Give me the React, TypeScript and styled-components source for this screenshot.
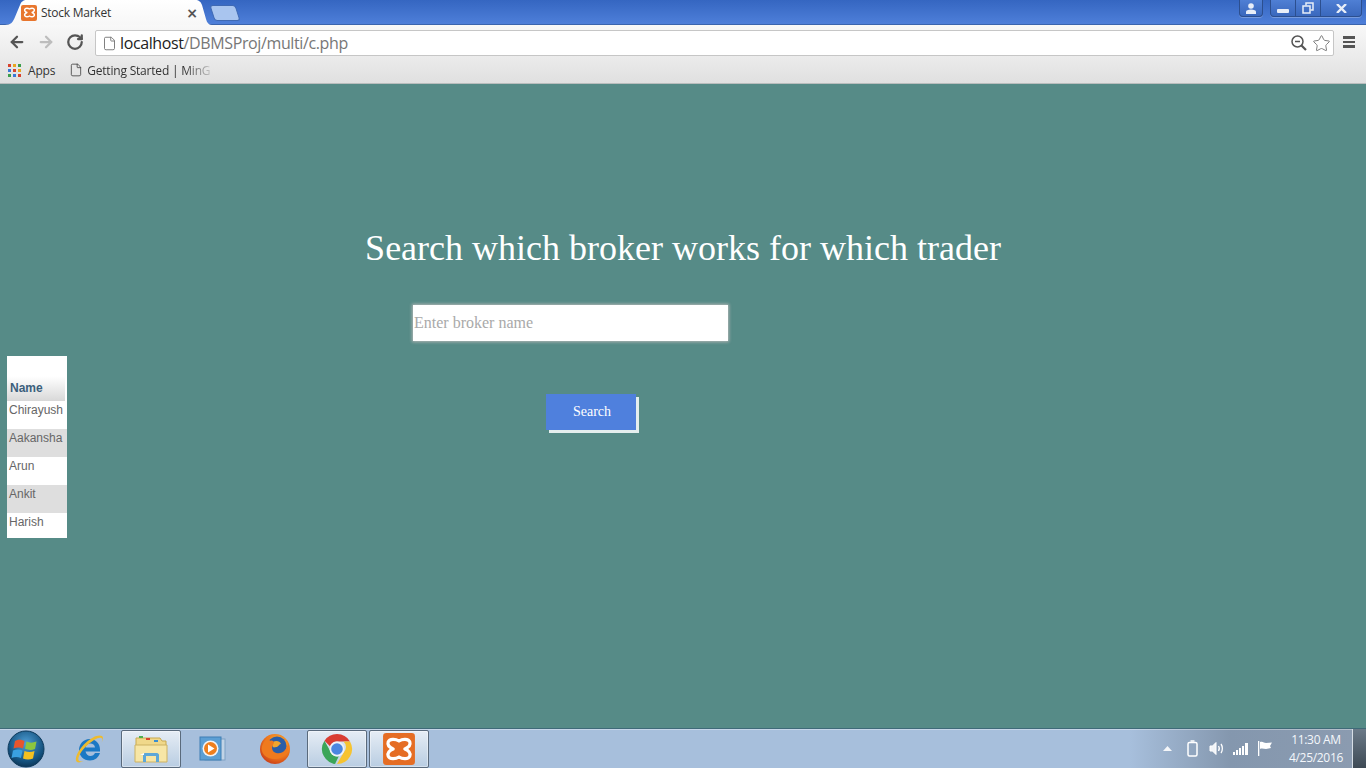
import React from 'react';
import styled, { createGlobalStyle } from 'styled-components';
import { ArrowLeft, ArrowRight, File, RotateCw, Star } from 'lucide-react';

// Styles
const GlobalStyle = createGlobalStyle`
  html, body, #root {
    height: 100%;
  }

  body {
    margin: 0;
    overflow: hidden;
    font-family: "Open Sans", "Liberation Sans", sans-serif;
  }
`;

const Screen = styled.div`
  display: flex;
  flex-direction: column;
  width: 1366px;
  height: 768px;
`;

const TabStrip = styled.div`
  display: flex;
  flex: 0 0 25px;
  padding-left: 5px;
  background: linear-gradient(#3566c1, #4f80da);
  box-shadow: inset 0 -1px 0 #3a64ad;
`;

const Tab = styled.div`
  display: flex;
  align-items: center;
  width: 207px;
  padding-left: 16px;
  box-sizing: border-box;
  background: linear-gradient(#fff, #f7f7f7);
  clip-path: path('M0 25 C6 25 8 22 10 17 L15 5 C16 2 18 0 22 0 L190 0 C194 0 196 2 197 5 L201 19 C202 23 204 25 207 25 Z');
`;

const Favicon = styled.div`
  display: flex;
  align-items: center;
  justify-content: center;
  width: 16px;
  height: 16px;
  border-radius: 2px;
  background: #e8762e;
`;

const TabTitle = styled.span`
  flex: 1;
  margin-left: 4px;
  font-size: 12px;
  letter-spacing: -0.25px;
  color: #333;
`;

const TabClose = styled.span`
  margin-right: 14px;
  font-family: "DejaVu Sans", sans-serif;
  font-size: 14px;
  font-weight: bold;
  color: #555;
`;

const NewTab = styled.div`
  align-self: flex-start;
  width: 26px;
  height: 16px;
  margin: 5px 0 0 0;
  background: #a9c5ef;
  border: 1px solid #3f69b3;
  border-radius: 3px;
  box-sizing: border-box;
  transform: skewX(18deg);
`;

const WindowControls = styled.div`
  display: flex;
  align-self: flex-start;
  margin-left: auto;
  margin-right: 4px;
`;

const WindowGroup = styled.div`
  display: flex;
  height: 17px;
  margin-left: 7px;
  border: 1px solid #2c4f8f;
  border-top: 0;
  border-radius: 0 0 4px 4px;
  box-sizing: border-box;
  background: linear-gradient(#4f7fd4, #3a68bd);
  box-shadow: 0 1px 0 rgba(255, 255, 255, 0.25);
`;

const WindowButton = styled.div<{ $w: number }>`
  display: flex;
  align-items: center;
  justify-content: center;
  width: ${(p) => p.$w}px;
  box-sizing: border-box;
  color: #e8eef8;

  & + & {
    border-left: 1px solid #2c4f8f;
  }
`;

const MinimizeBar = styled.span`
  width: 12px;
  height: 4px;
  margin-top: 5px;
  border-radius: 1px;
  background: #e8eef8;
`;

const Toolbar = styled.div`
  display: flex;
  align-items: center;
  flex: 0 0 32px;
  padding-top: 2px;
  box-sizing: border-box;
  background: linear-gradient(#f8f8f8, #ebebeb);
`;

const NavSlot = styled.div<{ $w: number; $color: string }>`
  display: flex;
  align-items: center;
  justify-content: center;
  width: ${(p) => p.$w}px;
  color: ${(p) => p.$color};
`;

const AddressBar = styled.div`
  display: flex;
  align-items: center;
  flex: 1;
  height: 26px;
  margin: 2px 0 0 5px;
  padding: 0 2px 0 6px;
  box-sizing: border-box;
  background: #fff;
  border: 1px solid #c6c6c6;
  border-radius: 2px;
  color: #777;
`;

const Url = styled.div`
  flex: 1;
  margin-left: 3px;
  font-size: 16px;
  letter-spacing: -0.38px;
  color: #777;

  b {
    font-weight: 400;
    color: #222;
  }
`;

const StarIcon = styled(Star)`
  margin-left: 4px;
`;

const MenuSlot = styled.div`
  display: flex;
  flex-direction: column;
  gap: 2px;
  width: 12px;
  margin: 0 11px 0 9px;

  span {
    height: 2.5px;
    background: #555;
  }
`;

const BookmarkBar = styled.div`
  display: flex;
  align-items: center;
  flex: 0 0 27px;
  padding-left: 8px;
  box-sizing: border-box;
  font-size: 12px;
  letter-spacing: -0.2px;
  color: #333;
  background: linear-gradient(#ebebeb, #e0e0e0);
  border-bottom: 1px solid #b9bdbd;
`;

const AppsGrid = styled.div`
  display: grid;
  grid-template-columns: repeat(3, 3px);
  grid-auto-rows: 3px;
  gap: 2px;
`;

const AppsDot = styled.i<{ $color: string }>`
  background: ${(p) => p.$color};
`;

const BookmarkLabel = styled.span`
  margin: 0 14px 0 7px;
`;

const FadedBookmark = styled.span`
  margin-left: 4px;
  padding-right: 6px;
  mask-image: linear-gradient(90deg, #000 75%, transparent 100%);
`;

const Page = styled.main`
  display: grid;
  flex: 1;
  grid-template-columns: 413px 1fr;
  grid-template-rows: 221px 1fr;
  background: #568b87;
`;

const Heading = styled.h1`
  grid-column: 1 / 3;
  align-self: end;
  margin: 0 0 36px;
  font-family: "Liberation Serif", serif;
  font-size: 36px;
  font-weight: 400;
  line-height: 41px;
  text-align: center;
  color: #fff;
`;

const BrokerTable = styled.table`
  align-self: start;
  width: 60px;
  margin: 51px 0 0 7px;
  border-collapse: collapse;
  font-family: "Liberation Sans", sans-serif;
  font-size: 12px;
  background: #fff;
`;

const HeadCell = styled.th`
  height: 45px;
  padding: 19px 0 0 3px;
  box-sizing: border-box;
  text-align: left;
  color: #3c5f7c;
  background: linear-gradient(#fff 45%, #d8d8d8) no-repeat;
  background-size: calc(100% - 2px) 100%;
`;

const NameRow = styled.tr`
  &:nth-child(even) {
    background: #dedede;
  }
`;

const NameCell = styled.td<{ $h: number }>`
  height: ${(p) => p.$h}px;
  padding: 2px 0 0 2px;
  box-sizing: border-box;
  vertical-align: top;
  white-space: nowrap;
  color: #666;
`;

const SearchForm = styled.form`
  display: flex;
  flex-direction: column;
  align-items: flex-start;
`;

const SearchInput = styled.input`
  width: 315px;
  height: 36px;
  padding: 0 1px;
  box-sizing: border-box;
  border: 0;
  outline: 0;
  font-family: "Liberation Serif", serif;
  font-size: 16px;
  background: #fff;
  box-shadow: 0 0 3px 1px rgba(200, 190, 190, 0.8);

  &::placeholder {
    color: #a9a9a9;
  }
`;

const SearchButton = styled.button`
  width: 90px;
  height: 36px;
  margin: 53px 0 0 133px;
  padding: 0 0 0 2px;
  border: 0;
  font-family: "Liberation Serif", serif;
  font-size: 14px;
  color: #fff;
  background: #4f80dd;
  box-shadow: 3px 3px 0 #e4eeee;
`;

const Taskbar = styled.footer`
  display: flex;
  align-items: center;
  flex: 0 0 40px;
  box-sizing: border-box;
  border-top: 1px solid #3f6a78;
  background: linear-gradient(90deg, #a7bfdc 0, #a7bfdc 1130px, #8497ae 1230px, #8b9bb0 1352px);
  box-shadow: inset 0 1px 0 rgba(255, 255, 255, 0.35);
`;

const StartSlot = styled.div`
  display: flex;
  align-items: center;
  justify-content: center;
  width: 52px;
  margin-right: 7px;
`;

const TaskSlot = styled.div<{ $active?: boolean }>`
  display: flex;
  align-items: center;
  justify-content: center;
  width: 60px;
  height: 38px;
  margin-right: 2px;
  box-sizing: border-box;
  border-radius: 2px;
  border: 1px solid ${(p) => (p.$active ? '#5a6a7c' : 'transparent')};
  background: ${(p) => (p.$active ? 'linear-gradient(#e6edf5, #b9cde2)' : 'transparent')};
  box-shadow: ${(p) => (p.$active ? 'inset 0 0 0 1px rgba(255, 255, 255, 0.4)' : 'none')};
`;

const Tray = styled.div`
  display: flex;
  align-items: center;
  margin-left: auto;
  color: #fff;
`;

const TrayIcon = styled.div<{ $w: number }>`
  display: flex;
  align-items: center;
  justify-content: center;
  width: ${(p) => p.$w}px;
  height: 20px;
`;

const Clock = styled.div`
  width: 62px;
  margin: 0 5px 0 10px;
  font-size: 12px;
  line-height: 17.5px;
  letter-spacing: -0.3px;
  text-align: center;
  white-space: nowrap;
  color: #f4f7fb;
`;

const ShowDesktop = styled.div`
  width: 14px;
  height: 39px;
  background: linear-gradient(#6b7a88, #3e4a55);
  border-left: 1px solid #d7dee6;
  box-sizing: border-box;
`;

// Drawings
const XamppMark: React.FC<{ size: number; tile?: boolean }> = ({ size, tile }) => (
  <svg width={size} height={size} viewBox="0 0 32 32">
    {tile && <rect x="1" y="1" width="30" height="30" rx="3" fill="#e56d24" />}
    <path
      d="M16 8.500C13 6.500 7 6 5.800 9.500C5 12 7 14.500 10.500 16C7 17.500 5 20 5.800 22.500C7 26 13 25.500 16 23.500C19 25.500 25 26 26.200 22.500C27 20 25 17.500 21.500 16C25 14.500 27 12 26.200 9.500C25 6 19 6.500 16 8.500Z"
      fill="none"
      stroke="#fff"
      strokeWidth="3"
      strokeLinejoin="round"
    />
  </svg>
);

const WindowsOrb = () => (
  <svg width="38" height="38" viewBox="0 0 38 38">
    <defs>
      <radialGradient id="orb" cx="50%" cy="35%" r="70%">
        <stop offset="0" stopColor="#4f9fd6" />
        <stop offset="0.7" stopColor="#14527f" />
        <stop offset="1" stopColor="#0b2f4d" />
      </radialGradient>
    </defs>
    <circle cx="19" cy="19" r="18" fill="url(#orb)" stroke="#0d3a5c" />
    <path d="M8 11c3.500-2 6-1.500 9.500 0l-1.500 7.500c-3-1.500-6-1.500-9.500 0z" fill="#e8552c" />
    <path d="M19.500 11.500c3 1.500 6 1.500 10 0l-1.500 7.500c-3.500 1.500-7 1-10-.2z" fill="#8cc63f" />
    <path d="M6 20.500c3.500-1.500 6.500-1.500 9.500 0L14 28c-3-1.500-6.500-1.500-9.500 0z" fill="#3aa0e0" />
    <path d="M17.500 21c3 1.200 6.500 1.500 10 0L26 28.500c-3.500 1.500-7 1.200-10 0z" fill="#f4c020" />
  </svg>
);

const IeIcon = () => (
  <svg width="32" height="32" viewBox="0 0 32 32">
    <path
      fillRule="evenodd"
      d="M16.500 6c6 0 10.500 4.500 10.500 10.500v2H12.500c.5 2.500 2.500 4.500 5 4.500 2.200 0 3.500-1 4.500-3h5c-1.500 4.500-5 7.500-10 7.500-6.500 0-11-4.800-11-10.500S10.500 6 16.500 6zM12.500 14.500H22c-.2-2.500-2.300-4-4.700-4-2.500 0-4.300 1.500-4.800 4z"
      fill="#1b78c4"
    />
    <path
      d="M29 3c-3.500-2-10 1-16 6.500C6.500 15.500 2 23 3 27.500c.6 2.500 4 2.500 7.500.5-2.500.8-4.500.5-5-1-1-3 3-9.500 9-15C20 7 26 3.500 28.500 5c1.200.8 1 2.500 0 5 1.500-3 2-6 .5-7z"
      fill="#eebb2e"
    />
  </svg>
);

const ExplorerIcon = () => (
  <svg width="34" height="30" viewBox="0 0 34 30">
    <path d="M2 4h24l2 3h4v6H2z" fill="#f0d88a" stroke="#c9a94f" />
    <rect x="5" y="2" width="4" height="2" fill="#4caf50" />
    <rect x="12" y="4" width="4" height="2" fill="#d9432f" />
    <rect x="20" y="6" width="4" height="2" fill="#3a8fd0" />
    <path d="M1 11h32v17H1z" fill="#f7e6a6" stroke="#cdb263" />
    <path d="M9 28v-7c0-1 1-2 2-2h12c1 0 2 1 2 2v7h-3v-6H12v6z" fill="#5da7d8" />
    <path d="M6 21l4-2v2z" fill="#fff" />
  </svg>
);

const MediaIcon = () => (
  <svg width="30" height="28" viewBox="0 0 30 28">
    <rect x="7" y="4" width="20" height="21" fill="#c2d4e6" stroke="#7fa2c4" />
    <rect x="2" y="2" width="21" height="23" fill="#5c9fd4" stroke="#3f7fb4" />
    <circle cx="12.500" cy="13.500" r="8" fill="#f4f4f4" />
    <circle cx="12.500" cy="13.500" r="6.500" fill="#ee7f1e" />
    <path d="M10 9.500l6.500 4-6.500 4z" fill="#fff" />
  </svg>
);

const FirefoxIcon = () => (
  <svg width="32" height="32" viewBox="0 0 32 32">
    <defs>
      <radialGradient id="fox" cx="60%" cy="35%" r="70%">
        <stop offset="0" stopColor="#f8c03a" />
        <stop offset="0.6" stopColor="#ef7a1e" />
        <stop offset="1" stopColor="#c83c18" />
      </radialGradient>
    </defs>
    <circle cx="16" cy="16" r="15" fill="url(#fox)" />
    <circle cx="18" cy="13" r="9.500" fill="#2a5ea8" />
    <path d="M14 9c3-2 7-1 8 2-2 0-2 2-4 3-2 0-3 1-4 0-1-2-1-3 0-5z" fill="#f1a52e" />
    <path d="M3 13C5 8 8 5 12 3c-2 2-2 4-1 5 2-1 4 0 4 2-2 3-3 6 0 9 3 2 8 2 11-2 2-3 3-5 4-6 0 8-6 15-14 15C7 26 1 20 3 13z" fill="#ef7a1e" />
  </svg>
);

const ChromeIcon = () => (
  <svg width="32" height="32" viewBox="0 0 32 32">
    <path d="M16 1a15 15 0 0 1 13 7.500H16a7.500 7.500 0 0 0-7 4.800L3.500 7.700A15 15 0 0 1 16 1z" fill="#d93d32" />
    <path d="M29 8.500A15 15 0 0 1 16 31l6.500-11.300a7.500 7.500 0 0 0 0-11.200z" fill="#f6c330" />
    <path d="M16 31A15 15 0 0 1 3.500 7.700L10 19.500a7.500 7.500 0 0 0 7.800 3.800L14 31z" fill="#3ba558" />
    <circle cx="16" cy="16" r="7.500" fill="#eef2f6" />
    <circle cx="16" cy="16" r="5.800" fill="#4a86e0" />
  </svg>
);

const MagnifierMinus = () => (
  <svg width="18" height="18" viewBox="0 0 18 18" fill="none" stroke="#555">
    <circle cx="7.500" cy="7.500" r="5.500" strokeWidth="1.500" />
    <path d="M5 7.500h5" strokeWidth="1.500" />
    <path d="M11.500 11.500l4.500 4.500" strokeWidth="2.200" />
  </svg>
);

const UserGlyph = () => (
  <svg width="12" height="11" viewBox="0 0 12 11" fill="currentColor">
    <circle cx="6" cy="3" r="2.800" />
    <path d="M1 11V8.500C1 7.500 3 6.500 6 6.500s5 1 5 2V11z" />
  </svg>
);

const RestoreGlyph = () => (
  <svg width="12" height="12" viewBox="0 0 12 12" fill="none" stroke="currentColor" strokeWidth="1.500">
    <rect x="1" y="4" width="7" height="7" />
    <path d="M4 3.500V1h7v7H8.500" />
  </svg>
);

const CloseGlyph = () => (
  <svg width="11" height="9" viewBox="0 0 11 9" stroke="currentColor" strokeWidth="2.400">
    <path d="M1 0l9 9M10 0L1 9" />
  </svg>
);

const BatteryGlyph = () => (
  <svg width="11" height="17" viewBox="0 0 11 17" fill="none" stroke="#fff" strokeWidth="1.500">
    <rect x="1" y="2.500" width="9" height="13.500" rx="1.500" />
    <path d="M3.500 1h4" />
  </svg>
);

const SpeakerGlyph = () => (
  <svg width="16" height="15" viewBox="0 0 16 15" fill="none" stroke="#fff">
    <path d="M1 5h2.500L7 1.500v12L3.500 10H1z" fill="#f1f4f8" />
    <path d="M9.500 5c1 1.500 1 3.500 0 5M12 3c1.800 2.500 1.800 6.500 0 9" strokeWidth="1.300" />
  </svg>
);

const SignalGlyph = () => (
  <svg width="16" height="12" viewBox="0 0 16 12" fill="#fff">
    <rect x="0" y="9" width="2" height="3" />
    <rect x="3" y="7" width="2" height="5" />
    <rect x="6" y="5" width="2" height="7" />
    <rect x="9" y="3" width="2" height="9" />
    <rect x="12" y="0" width="3" height="12" />
  </svg>
);

const FlagGlyph = () => (
  <svg width="16" height="15" viewBox="0 0 16 15" fill="#fff">
    <rect x="1" y="0" width="1.300" height="15" />
    <path d="M3 1c3-1 4 1 6 1l6-.5L13 5l1 2-5 1C7 8 5 7 3 8z" />
  </svg>
);

const UpTriangle = () => (
  <svg width="9" height="5" viewBox="0 0 9 5" fill="#f4f6f9">
    <path d="M0 5l4.500-5L9 5z" />
  </svg>
);

const appColors = ['#d8432e', '#e9a521', '#3b9e4c', '#3a78d8', '#d8432e', '#e9a521', '#3b9e4c', '#3a78d8', '#d8432e'];

const names = ['Chirayush', 'Aakansha', 'Arun', 'Ankit', 'Harish'];

const App: React.FC = () => {
  return (
    <Screen>
      <GlobalStyle />

      <TabStrip>
        <Tab>
          <Favicon>
            <XamppMark size={15} />
          </Favicon>
          <TabTitle>Stock Market</TabTitle>
          <TabClose>×</TabClose>
        </Tab>
        <NewTab />
        <WindowControls>
          <WindowGroup>
            <WindowButton $w={22}>
              <UserGlyph />
            </WindowButton>
          </WindowGroup>
          <WindowGroup>
            <WindowButton $w={24}>
              <MinimizeBar />
            </WindowButton>
            <WindowButton $w={25}>
              <RestoreGlyph />
            </WindowButton>
            <WindowButton $w={41}>
              <CloseGlyph />
            </WindowButton>
          </WindowGroup>
        </WindowControls>
      </TabStrip>

      <Toolbar>
        <NavSlot $w={33} $color="#555">
          <ArrowLeft size={18} strokeWidth={3} />
        </NavSlot>
        <NavSlot $w={26} $color="#bdbdbd">
          <ArrowRight size={18} strokeWidth={3} />
        </NavSlot>
        <NavSlot $w={31} $color="#555">
          <RotateCw size={18} strokeWidth={3} />
        </NavSlot>
        <AddressBar>
          <File size={15} strokeWidth={1.5} />
          <Url>
            <b>localhost</b>/DBMSProj/multi/c.php
          </Url>
          <MagnifierMinus />
          <StarIcon size={19} strokeWidth={1.2} />
        </AddressBar>
        <MenuSlot>
          <span />
          <span />
          <span />
        </MenuSlot>
      </Toolbar>

      <BookmarkBar>
        <AppsGrid>
          {appColors.map((color, i) => (
            <AppsDot key={i} $color={color} />
          ))}
        </AppsGrid>
        <BookmarkLabel>Apps</BookmarkLabel>
        <File size={14} strokeWidth={1.3} />
        <FadedBookmark>Getting Started | MinG</FadedBookmark>
      </BookmarkBar>

      <Page>
        <Heading>Search which broker works for which trader</Heading>
        <BrokerTable>
          <thead>
            <tr>
              <HeadCell>Name</HeadCell>
            </tr>
          </thead>
          <tbody>
            {names.map((name, i) => (
              <NameRow key={name}>
                <NameCell $h={i === names.length - 1 ? 25 : 28}>{name}</NameCell>
              </NameRow>
            ))}
          </tbody>
        </BrokerTable>
        <SearchForm>
          <SearchInput placeholder="Enter broker name" />
          <SearchButton type="button">Search</SearchButton>
        </SearchForm>
      </Page>

      <Taskbar>
        <StartSlot>
          <WindowsOrb />
        </StartSlot>
        <TaskSlot>
          <IeIcon />
        </TaskSlot>
        <TaskSlot $active>
          <ExplorerIcon />
        </TaskSlot>
        <TaskSlot>
          <MediaIcon />
        </TaskSlot>
        <TaskSlot>
          <FirefoxIcon />
        </TaskSlot>
        <TaskSlot $active>
          <ChromeIcon />
        </TaskSlot>
        <TaskSlot $active>
          <XamppMark size={34} tile />
        </TaskSlot>
        <Tray>
          <TrayIcon $w={20}>
            <UpTriangle />
          </TrayIcon>
          <TrayIcon $w={30}>
            <BatteryGlyph />
          </TrayIcon>
          <TrayIcon $w={20}>
            <SpeakerGlyph />
          </TrayIcon>
          <TrayIcon $w={28}>
            <SignalGlyph />
          </TrayIcon>
          <TrayIcon $w={20}>
            <FlagGlyph />
          </TrayIcon>
          <Clock>
            11:30 AM
            <br />
            4/25/2016
          </Clock>
          <ShowDesktop />
        </Tray>
      </Taskbar>
    </Screen>
  );
};

export default App;
